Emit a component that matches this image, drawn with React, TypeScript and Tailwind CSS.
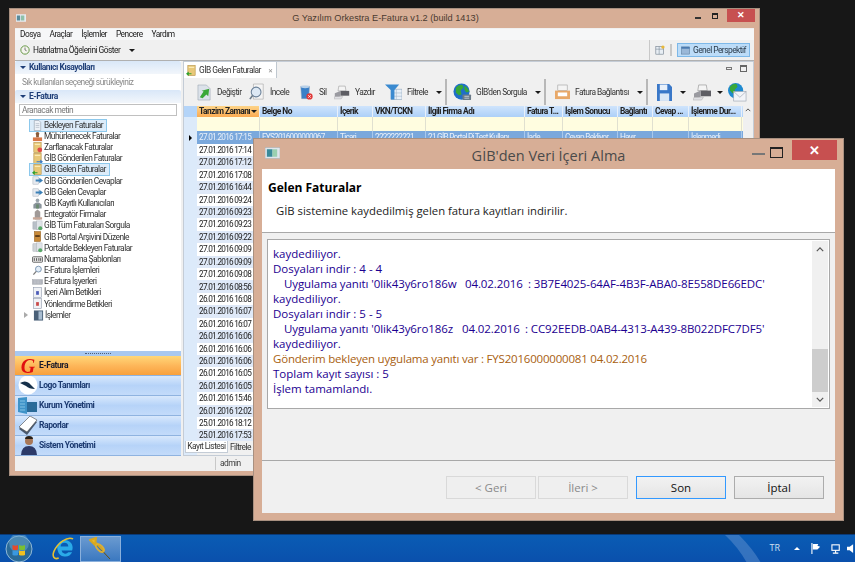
import React from "react";

const cols = [
  { n: "Tanzim Zamanı", w: "w-[63px]" },
  { n: "Belge No", w: "w-[78px]" },
  { n: "İçerik", w: "w-[35px]" },
  { n: "VKN/TCKN", w: "w-[53px]" },
  { n: "İlgili Firma Adı", w: "w-[99px]" },
  { n: "Fatura T...", w: "w-[38px]" },
  { n: "İşlem Sonucu", w: "w-[55px]" },
  { n: "Bağlantı", w: "w-[35px]" },
  { n: "Cevap ...", w: "w-[36px]" },
  { n: "İşlenme Dur...", w: "w-[53px]" },
];
const firstRow = ["27.01.2016 17:15", "FYS2016000000067", "Ticari", "2222222221", "21 GİB Portal Pi Test Kullanı", "İade", "Cevap Bekliyor", "Hayır", "", "İşlenmedi"];
const times = ["27.01.2016 17:14", "27.01.2016 17:12", "27.01.2016 17:08", "27.01.2016 16:44", "27.01.2016 09:24", "27.01.2016 09:23", "27.01.2016 09:23", "27.01.2016 09:22", "27.01.2016 09:09", "27.01.2016 09:09", "27.01.2016 09:08", "27.01.2016 08:56", "26.01.2016 16:08", "26.01.2016 16:07", "26.01.2016 16:07", "26.01.2016 16:06", "26.01.2016 16:06", "26.01.2016 16:06", "26.01.2016 16:05", "26.01.2016 16:05", "26.01.2016 15:46", "26.01.2016 12:02", "25.01.2016 18:12", "25.01.2016 17:53"];

function Folder({ badge }: { badge: string }) {
  return (
    <svg viewBox="0 0 12 12" className="w-[11px] h-[11px] shrink-0">
      <rect x="2" y="0.5" width="8" height="11" fill="#e8c878" stroke="#b08a3a" strokeWidth="0.6" />
      <rect x="3" y="2" width="6" height="1" fill="#fff4c8" />
      {badge === "red" && <circle cx="8.5" cy="8.5" r="2.6" fill="#e04848" />}
      {badge === "blue" && <path d="M5 9h4V7l3 2.5L9 12v-2H5z" fill="#3a7ac8" />}
      {badge === "green" && <path d="M6 9H3V7L0 9.5 3 12v-2h3z" fill="#2ca02c" />}
    </svg>
  );
}
function Doc({ c = "#d8dde6" }: { c?: string }) {
  return (
    <svg viewBox="0 0 12 12" className="w-[11px] h-[11px] shrink-0">
      <path d="M2.5.5h5l2 2v9h-7z" fill={c} stroke="#8a94a4" strokeWidth="0.6" />
      <path d="M4 4h4M4 6h4M4 8h4" stroke="#9aa4b4" strokeWidth="0.6" />
    </svg>
  );
}
function Stamp() {
  return (
    <svg viewBox="0 0 12 12" className="w-[11px] h-[11px] shrink-0">
      <circle cx="6" cy="3" r="2" fill="#8a5a3a" />
      <rect x="4.5" y="4" width="3" height="3" fill="#8a5a3a" />
      <rect x="1" y="7" width="10" height="4" fill="#d87848" />
    </svg>
  );
}
function Arrows() {
  return (
    <svg viewBox="0 0 12 12" className="w-[11px] h-[11px] shrink-0">
      <rect x="1" y="2" width="6" height="8" fill="#e6eaf0" stroke="#a0a8b4" strokeWidth="0.5" />
      <path d="M4 5h4V3l4 3-4 3V7H4z" fill="#3a80b8" />
    </svg>
  );
}
function Users() {
  return (
    <svg viewBox="0 0 12 12" className="w-[11px] h-[11px] shrink-0">
      <circle cx="6" cy="2.6" r="2" fill="#9aa4ac" />
      <path d="M1.5 11.5V7l3-2h3l3 2v4.500z" fill="#8a949c" />
      <rect x="4.5" y="7" width="3" height="4.5" fill="#6a8a70" />
    </svg>
  );
}
function Tower() {
  return (
    <svg viewBox="0 0 12 12" className="w-[11px] h-[11px] shrink-0">
      <path d="M3 11.5V3l3-2.5L9 3v8.500z" fill="#a09a98" />
      <rect x="1" y="9" width="10" height="2.5" fill="#c8a898" />
    </svg>
  );
}
function Server({ c = "#b8c0c8" }: { c?: string }) {
  return (
    <svg viewBox="0 0 12 12" className="w-[11px] h-[11px] shrink-0">
      <rect x="1" y="2" width="7" height="8" fill={c} stroke="#8a929a" strokeWidth="0.4" />
      <rect x="5" y="1" width="6" height="9" fill="#dfe3e8" stroke="#9aa2aa" strokeWidth="0.4" />
      <circle cx="9" cy="9" r="2.2" fill="#58a868" />
    </svg>
  );
}
function Box() {
  return (
    <svg viewBox="0 0 12 12" className="w-[11px] h-[11px] shrink-0">
      <rect x="2.5" y="0.5" width="7" height="11" fill="#c88a3a" stroke="#8a5a20" strokeWidth="0.5" />
      <rect x="3.5" y="4.5" width="5" height="2" fill="#5a3a18" />
    </svg>
  );
}
function Numbers() {
  return (
    <svg viewBox="0 0 12 12" className="w-[11px] h-[11px] shrink-0">
      <rect x="0.5" y="3" width="11" height="6" rx="1" fill="#e8e8e8" stroke="#404040" strokeWidth="0.8" />
      <path d="M2.5 4.5v3M5 4.5v3M7.5 4.5v3M9.5 4.5v3" stroke="#303030" strokeWidth="0.9" />
    </svg>
  );
}
function Loupe() {
  return (
    <svg viewBox="0 0 12 12" className="w-[11px] h-[11px] shrink-0">
      <circle cx="7" cy="4.5" r="3.2" fill="#e4eef8" stroke="#6a88a8" strokeWidth="0.9" />
      <path d="M4.6 7L1.5 10.5" stroke="#7a7a7a" strokeWidth="1.4" />
    </svg>
  );
}
function Keyboard() {
  return (
    <svg viewBox="0 0 12 12" className="w-[11px] h-[11px] shrink-0">
      <rect x="0.5" y="4" width="11" height="5" fill="#b0b4bc" stroke="#8a8e98" strokeWidth="0.4" />
      <path d="M2 5.5h8M2 7.5h8" stroke="#e8e8ee" strokeWidth="0.5" strokeDasharray="1 0.6" />
    </svg>
  );
}
function Script({ c }: { c: string }) {
  return (
    <svg viewBox="0 0 12 12" className="w-[11px] h-[11px] shrink-0">
      <rect x="1.5" y="0.5" width="9" height="11" fill="#f0f2f6" stroke="#8a94a8" strokeWidth="0.6" />
      <rect x="4.5" y="4.5" width="3" height="4" fill={c} />
    </svg>
  );
}
function Book() {
  return (
    <svg viewBox="0 0 12 12" className="w-[11px] h-[11px] shrink-0">
      <rect x="1" y="0.5" width="10" height="11" fill="#4a6078" />
      <rect x="6" y="1.5" width="4" height="9" fill="#a8bcd0" />
    </svg>
  );
}

const tree: { t: string; i: React.ReactNode; sel?: boolean }[] = [
  { t: "Bekleyen Faturalar", i: <Doc c="#eef2f8" />, sel: true },
  { t: "Mühürlenecek Faturalar", i: <Stamp /> },
  { t: "Zarflanacak Faturalar", i: <Folder badge="red" /> },
  { t: "GİB Gönderilen Faturalar", i: <Folder badge="blue" /> },
  { t: "GİB Gelen Faturalar", i: <Folder badge="green" />, sel: true },
  { t: "GİB Gönderilen Cevaplar", i: <Arrows /> },
  { t: "GİB Gelen Cevaplar", i: <Arrows /> },
  { t: "GİB Kayıtlı Kullanıcıları", i: <Users /> },
  { t: "Entegratör Firmalar", i: <Tower /> },
  { t: "GİB Tüm Faturaları Sorgula", i: <Server /> },
  { t: "GİB Portal Arşivini Düzenle", i: <Box /> },
  { t: "Portalde Bekleyen Faturalar", i: <Server c="#d0d4d8" /> },
  { t: "Numaralama Şablonları", i: <Numbers /> },
  { t: "E-Fatura İşlemleri", i: <Loupe /> },
  { t: "E-Fatura İşyerleri", i: <Keyboard /> },
  { t: "İçeri Alım Betikleri", i: <Script c="#4a5ab8" /> },
  { t: "Yönlendirme Betikleri", i: <Script c="#c84848" /> },
];

function Caret({ cls = "" }: { cls?: string }) {
  return <span className={`inline-block shrink-0 w-0 h-0 border-l-[3px] border-r-[3px] border-t-[3px] border-l-transparent border-r-transparent border-t-[#1a1a1a] ${cls}`} />;
}

function PrinterIcon({ cls }: { cls: string }) {
  return (
    <svg viewBox="0 0 20 18" className={cls}>
      <path d="M6 1h8l1 6H5z" fill="#f4f4f4" stroke="#888" strokeWidth="0.6" />
      <path d="M8 7h11v6H8z" fill="#5e5e64" />
      <path d="M1 10l7-3v7l-7 2z" fill="#9a9aa0" />
      <path d="M1 14h10l-2 3H0z" fill="#e0e0e4" stroke="#999" strokeWidth="0.4" />
    </svg>
  );
}
function GlobeIcon({ cls }: { cls: string }) {
  return (
    <svg viewBox="0 0 20 20" className={cls}>
      <circle cx="9" cy="9" r="8.5" fill="#1f6fc8" />
      <path d="M3 5q3-4 7-3l1 3-3 3 1 4-3 1-3-3zM12 3q4 2 5 6l-3 1-2-3z" fill="#38a838" />
      <rect x="10" y="12" width="9" height="6" rx="1" fill="#6a7a88" />
      <path d="M12 14h5M12 16h5" stroke="#d8dfe6" strokeWidth="0.8" />
    </svg>
  );
}

function Logo({ k }: { k: string }) {
  if (k === "g")
    return (
      <div className="w-[16px] h-[18px] ml-[5px] flex items-center justify-center text-[#e01010] font-['Liberation_Serif',serif] italic font-bold text-[20px] tracking-normal leading-none">
        G
      </div>
    );
  if (k === "feather")
    return (
      <svg viewBox="0 0 22 20" className="w-[22px] h-[20px] ml-[2px]">
        <circle cx="11" cy="9" r="9.5" fill="#fff" />
        <path d="M3 7q5-3 9 0l6 6q-6 0-9-3z" fill="#16304a" />
      </svg>
    );
  if (k === "building")
    return (
      <svg viewBox="0 0 22 20" className="w-[22px] h-[20px] ml-[2px]">
        <path d="M1 2l9-1v17l-9-2z" fill="#3f93c8" />
        <path d="M10 6h10v10H10z" fill="#2a6a98" />
        <path d="M3 5h5M3 8h5M3 11h5M3 14h5" stroke="#8ac8e8" strokeWidth="0.9" />
      </svg>
    );
  if (k === "report")
    return (
      <svg viewBox="0 0 22 20" className="w-[22px] h-[20px] ml-[2px]">
        <path d="M2 13L13 2l7 4-10 13z" fill="#4a5a70" />
        <path d="M2 11L13 0l7 4L10 16z" fill="#fff" stroke="#444" strokeWidth="0.6" />
      </svg>
    );
  return (
    <svg viewBox="0 0 22 20" className="w-[22px] h-[20px] ml-[2px]">
      <circle cx="12" cy="5" r="4" fill="#a87858" />
      <path d="M12 0a4 3 0 0 1 4 3H8a4 3 0 0 1 4-3z" fill="#2a2018" />
      <path d="M4 20q0-10 8-10t8 10z" fill="#2c3a68" />
    </svg>
  );
}

function OutlookBar({ k, label, active }: { k: string; label: string; active?: boolean }) {
  return (
    <div
      className={
        active
          ? "h-[20px] flex items-center bg-gradient-to-b from-[#ffd778] via-[#fdb75a] to-[#f8a03c] border-b border-[#8fb3e0]"
          : "h-[20px] flex items-center bg-gradient-to-b from-[#d8e8fc] via-[#b6d3f8] to-[#c3dbfa] border-b border-[#8fb3e0] overflow-hidden"
      }
    >
      <div className="w-[24px] shrink-0">
        <Logo k={k} />
      </div>
      <span className={`text-[8.5px] font-bold tracking-[-0.42px] ${active ? "text-[#1a1a2a]" : "text-[#1c3a70]"}`}>{label}</span>
    </div>
  );
}

function SideHeader({ t }: { t: string }) {
  return (
    <div className="h-[13px] flex items-center pl-[5px] gap-[3px] bg-gradient-to-b from-[#d9e7f8] to-[#f2f6fb] rounded-t-[2px]">
      <Caret cls="!border-t-[#1f3f78]" />
      <span className="text-[8.5px] font-bold tracking-[-0.45px] text-[#1f3f78]">{t}</span>
    </div>
  );
}

function Sep() {
  return <div className="ml-[3px] w-[2px] h-[26px] bg-[#b8b8b8] shrink-0" />;
}

function Label({ t, w }: { t: string; w: string }) {
  return <span className={`${w} ml-[5px] shrink-0 whitespace-nowrap`}>{t}</span>;
}

function MainWindow() {
  return (
    <div className="absolute left-[9px] top-[8px] w-[751px] h-[468px] bg-[#d7ae96] border border-[#a89080] flex flex-col font-['Roboto',sans-serif] text-[#333]">
      <div className="h-[19px] shrink-0 relative flex items-center justify-center">
        <svg viewBox="0 0 12 9" className="absolute left-[6px] top-[5px] w-[10px] h-[8px]">
          <rect width="12" height="9" fill="#e6ecf2" />
          <rect x="1" y="1.5" width="4" height="6" fill="#5a8a9a" />
          <rect x="6" y="1.5" width="4" height="6" fill="#8fc0a8" />
        </svg>
        <span className="text-[9.2px] text-[#4a3a30] ml-[2px] font-['Liberation_Sans',sans-serif]">G Yazılım Orkestra E-Fatura v1.2 (build 1413)</span>
        <div className="absolute right-[4px] top-0 flex items-start">
          <div className="w-[6px] h-[2px] bg-[#333] mt-[8px] mr-[11px]" />
          <div className="w-[6px] h-[6px] border border-[#222] border-t-2 mt-[4px] mr-[9px]" />
          <div className="w-[28px] h-[13px] bg-[#c75050] text-white text-[9px] font-bold leading-[13px] text-center">✕</div>
        </div>
      </div>
      <div className="flex-1 mx-[5px] mb-[4px] bg-[#f0f0f0] flex flex-col overflow-hidden text-[8.4px] tracking-[-0.52px] blur-[0.3px]">
        <div className="h-[11px] shrink-0 bg-[#f6f7f8] flex items-center pl-[5px] gap-[9px] text-[#222] mt-[1px]">
          <span>Dosya</span>
          <span>Araçlar</span>
          <span>İşlemler</span>
          <span>Pencere</span>
          <span>Yardım</span>
        </div>
        <div className="h-[20px] shrink-0 flex items-center pl-[5px] text-[#222]">
          <svg viewBox="0 0 12 12" className="w-[10px] h-[10px] mr-[3px]">
            <circle cx="6" cy="6" r="5" fill="#f4f4ee" stroke="#6a9a4a" strokeWidth="1.2" />
            <path d="M6 3v3l2 1" stroke="#444" strokeWidth="0.8" fill="none" />
          </svg>
          <span>Hatırlatma Öğelerini Göster</span>
          <Caret cls="ml-[9px]" />
          <div className="ml-auto flex items-center h-full border-l border-[#c8c8c8] pl-[5px] pr-[4px]">
            <svg viewBox="0 0 12 12" className="w-[10px] h-[10px]">
              <rect x="1" y="2" width="9" height="9" fill="#e8eef4" stroke="#6a7a88" strokeWidth="0.7" />
              <path d="M1 5h9M5 2v9" stroke="#6a7a88" strokeWidth="0.6" />
              <circle cx="9.5" cy="2.5" r="2" fill="#e8b838" />
            </svg>
            <div className="w-[2px] h-[12px] bg-[#c8c8c8] mx-[5px]" />
            <div className="h-[14px] w-[73px] bg-[#bcdcf8] border border-[#7db8e8] flex items-center pl-[3px] gap-[3px] whitespace-nowrap text-[#2a3a4a]">
              <svg viewBox="0 0 10 10" className="w-[9px] h-[9px] shrink-0">
                <rect x="0.5" y="1" width="9" height="8" fill="#9ab8d8" stroke="#5a7898" strokeWidth="0.6" />
                <rect x="0.5" y="1" width="9" height="2" fill="#4a7ab0" />
              </svg>
              <span>Genel Perspektif</span>
            </div>
          </div>
        </div>
        <div className="flex-1 min-h-0 flex border-t border-[#b0b0b0]">
          <aside className="w-[166px] shrink-0 bg-white flex flex-col">
            <SideHeader t="Kullanıcı Kısayolları" />
            <div className="h-[16px] shrink-0 flex items-center pl-[7px] text-[#8a8a8a]">Sık kullanılan seçeneği sürükleyiniz</div>
            <SideHeader t="E-Fatura" />
            <div className="mx-[4px] mt-[1px] h-[12px] shrink-0 border border-[#c0c0c0] flex items-center pl-[2px] text-[#777]">Aranacak metin</div>
            <div className="flex flex-col pt-[3.5px] pl-[15px]">
              {tree.map((r) => (
                <div key={r.t} className="h-[11.18px] flex items-center">
                  <div className={`h-[11.18px] flex items-center gap-[1px] pl-[2px] pr-[3px] ${r.sel ? "bg-[#dcecfa] outline outline-1 outline-[#8cc8ec]" : ""}`}>
                    {r.i}
                    <span className="whitespace-nowrap text-[#333]">{r.t}</span>
                  </div>
                </div>
              ))}
              <div className="h-[11.18px] flex items-center gap-[1px] -ml-[6px]">
                <span className="w-0 h-0 border-t-[3px] border-b-[3px] border-l-[4px] border-t-transparent border-b-transparent border-l-[#aaa] mr-[4px]" />
                <Book />
                <span className="text-[#333]">İşlemler</span>
              </div>
            </div>
            <div className="flex-1" />
            <div className="h-[5px] shrink-0 bg-[#a8c8f0] flex items-center justify-center">
              <span className="w-[26px] border-t border-dotted border-[#50607a]" />
            </div>
            <OutlookBar k="g" label="E-Fatura" active />
            <OutlookBar k="feather" label="Logo Tanımları" />
            <OutlookBar k="building" label="Kurum Yönetimi" />
            <OutlookBar k="report" label="Raporlar" />
            <OutlookBar k="user" label="Sistem Yönetimi" />
          </aside>
          <section className="flex-1 min-w-0 ml-[2px] flex flex-col border border-[#c4ccd6] bg-[#f0f0f0] relative">
            <div className="h-[16px] shrink-0 flex items-end relative">
              <div className="h-[16px] w-[93px] bg-white border-r border-[#c0c8d0] flex items-center pl-[2px] gap-[2px] text-[#333]">
                <Folder badge="green" />
                <span className="whitespace-nowrap">GİB Gelen Faturalar</span>
                <span className="text-[6px] text-[#888] ml-[5px]">✕</span>
              </div>
              <div className="absolute right-[6px] top-[3px] flex gap-[8px] items-center">
                <div className="w-[6px] h-[3px] border border-[#777]" />
                <div className="w-[7px] h-[7px] border border-[#666] border-t-2" />
              </div>
            </div>
            <div className="h-[28px] shrink-0 flex items-center text-[#333] pl-[13px] whitespace-nowrap">
              <svg viewBox="0 0 16 18" className="w-[15px] h-[17px] shrink-0">
                <path d="M1 1h9l4 4v12H1z" fill="#dce2ea" stroke="#9aa4b0" strokeWidth="0.6" />
                <path d="M3 14l4-6-2-1 8-2-1 8-2-2-4 4z" fill="#3aa838" />
              </svg>
              <Label t="Değiştir" w="w-[24px]" />
              <svg viewBox="0 0 18 18" className="w-[16px] h-[18px] ml-[8px] shrink-0">
                <path d="M5 0h11v17H5z" fill="#f4f4f4" stroke="#9a9a9a" strokeWidth="0.6" />
                <circle cx="8" cy="9" r="5.5" fill="#dce8f4" stroke="#6a8098" strokeWidth="1.2" />
                <path d="M4 13l-3 4" stroke="#6a7a88" strokeWidth="1.8" />
              </svg>
              <Label t="İncele" w="w-[20px]" />
              <svg viewBox="0 0 16 18" className="w-[14px] h-[17px] ml-[9px] shrink-0">
                <path d="M2 2h10l-1 14H3z" fill="#3a80c8" stroke="#8aa0b8" strokeWidth="0.6" />
                <ellipse cx="7" cy="2.5" rx="5" ry="1.6" fill="#b8d0e8" />
                <circle cx="12" cy="13.5" r="3.6" fill="#e03838" />
                <path d="M10.5 12l3 3M13.5 12l-3 3" stroke="#fff" strokeWidth="0.9" />
              </svg>
              <span className="ml-[6px] w-[8px] shrink-0">Sil</span>
              <PrinterIcon cls="w-[16px] h-[15px] ml-[7px] shrink-0" />
              <Label t="Yazdır" w="w-[20px]" />
              <svg viewBox="0 0 18 18" className="w-[17px] h-[18px] ml-[10px] shrink-0">
                <rect x="7" y="6" width="11" height="11" fill="#e8f0f8" stroke="#8aa0b8" strokeWidth="0.6" />
                <path d="M7 10h11M7 13.5h11M12 6v11" stroke="#a0b4c8" strokeWidth="0.6" />
                <path d="M0 1h15l-5 6v10H6V7z" fill="#3a8ad0" />
              </svg>
              <Label t="Filtrele" w="w-[22px]" />
              <Caret cls="ml-[7px]" />
              <Sep />
              <GlobeIcon cls="w-[19px] h-[19px] ml-[6px] shrink-0" />
              <span className="ml-[4px] w-[52px] shrink-0">GİB'den Sorgula</span>
              <Caret cls="ml-[7px]" />
              <Sep />
              <svg viewBox="0 0 16 18" className="w-[15px] h-[17px] ml-[9px] shrink-0">
                <rect x="3" y="1" width="10" height="6" fill="#f4f4f4" stroke="#999" strokeWidth="0.6" />
                <path d="M0 7h16v9H0z" fill="#e8a868" />
                <rect x="3" y="9" width="10" height="4" fill="#fff" />
              </svg>
              <Label t="Fatura Bağlantısı" w="w-[53px]" />
              <Caret cls="ml-[9px]" />
              <Sep />
              <svg viewBox="0 0 16 18" className="w-[15px] h-[17px] ml-[9px] shrink-0">
                <path d="M0 0h13l3 3v15H0z" fill="#3a78c8" />
                <rect x="3" y="0.5" width="8" height="6" fill="#e8f0fa" />
                <rect x="3" y="10" width="10" height="8" fill="#dce8f6" />
              </svg>
              <Caret cls="ml-[8px]" />
              <PrinterIcon cls="w-[19px] h-[17px] ml-[7px] shrink-0" />
              <Caret cls="ml-[5px]" />
              <svg viewBox="0 0 20 20" className="w-[19px] h-[19px] ml-[5px] shrink-0">
                <circle cx="8" cy="8" r="8" fill="#1f8ad0" />
                <path d="M2 4q3-4 7-3l1 3-3 3 1 3-3 1-3-3z" fill="#38a838" />
                <rect x="6" y="9" width="13" height="10" fill="#f2f4f8" stroke="#a0a8b4" strokeWidth="0.7" />
                <path d="M6 9l6.500 6L19 9" fill="none" stroke="#a0a8b4" strokeWidth="0.7" />
              </svg>
            </div>
            <div className="flex-1 min-h-0 flex overflow-hidden">
              <div className="w-[13px] shrink-0 flex flex-col bg-[#dceafa]">
                <div className="h-[11px] bg-[#b4d4f8]" />
                <div className="h-[14px]" />
                <div className="h-[13px] flex items-center justify-center">
                  <span className="w-0 h-0 border-t-[3px] border-b-[3px] border-l-[3px] border-t-transparent border-b-transparent border-l-black" />
                </div>
              </div>
              <div className="flex-1 min-w-0 flex flex-col">
                <div className="h-[11px] shrink-0 flex bg-gradient-to-b from-[#cfe4fc] to-[#add0f8] font-bold text-[#222]">
                  {cols.map((c, i) => (
                    <div key={c.n} className={`${c.w} shrink-0 flex items-center pl-[2px] whitespace-nowrap overflow-hidden border-r border-[#e8f0fa] ${i === 0 ? "bg-gradient-to-b from-[#fdd488] to-[#fbaa50]" : ""}`}>
                      <span>{c.n}</span>
                      {i === 0 && <Caret cls="ml-[1px]" />}
                    </div>
                  ))}
                </div>
                <div className="h-[14px] shrink-0 flex bg-[#fffde0]">
                  {cols.map((c) => (
                    <div key={c.n} className={`${c.w} shrink-0 border-r border-[#e0e0d0]`} />
                  ))}
                </div>
                <div className="h-[13px] shrink-0 flex bg-[#7aa8dc] text-[8.2px] tracking-[-0.72px] text-[#e8f0fa] whitespace-nowrap">
                  {cols.map((c, i) => (
                    <div key={c.n} className={`${c.w} shrink-0 pl-[2px] overflow-hidden border-r border-[#a8c8ec] leading-[13px]`}>{firstRow[i]}</div>
                  ))}
                </div>
                {times.map((t, i) => (
                  <div key={i} className={`h-[12.42px] shrink-0 flex items-center pl-[2px] text-[8.2px] tracking-[-0.72px] text-[#222] ${i % 2 === 0 ? "bg-white" : "bg-[#dfe9f8]"}`}>
                    {t}
                  </div>
                ))}
              </div>
              <div className="w-[10px] shrink-0 flex justify-center pt-[2px] bg-[#f0f0f0] text-[#444]">
                <svg viewBox="0 0 8 5" className="w-[6px] h-[4px]"><path d="M1 4l3-3 3 3" fill="none" stroke="#444" strokeWidth="1.2" /></svg>
              </div>
            </div>
            <div className="absolute left-[1px] top-[379px] h-[12px] flex text-[#333] bg-[#f0f0f0] w-[80px]">
              <div className="w-[43px] bg-white border border-[#c4ccd6] border-t-0 flex items-center justify-center whitespace-nowrap">Kayıt Listesi</div>
              <div className="pl-[2px] leading-[12px]">Filtrele</div>
            </div>
          </section>
        </div>
        <div className="h-[15px] shrink-0 flex items-center text-[#444] pl-[200px] bg-[#f0f0f0]">
          <span className="border-l border-[#c8c8c8] pl-[4px] h-[13px] leading-[13px]">admin</span>
        </div>
      </div>
    </div>
  );
}

function DialogLine({ t, orange }: { t: string; orange?: boolean }) {
  return <div className={`h-[15px] leading-[15px] whitespace-pre ${orange ? "text-[#a8600f] tracking-[-0.2px]" : "text-[#1c0090]"}`}>{t}</div>;
}

function ReplyLine({ name, date, uuid, nameW, dateW }: { name: string; date: string; uuid: string; nameW: string; dateW: string }) {
  return (
    <div className="h-[15px] leading-[15px] whitespace-pre pl-[11px] flex text-[#1c0090]">
      <span className={`${nameW} tracking-[-0.1px] shrink-0`}>{name}</span>
      <span className={`${dateW} tracking-[-0.1px] shrink-0`}>{date}</span>
      <span className="tracking-[-0.1px]">{uuid}</span>
    </div>
  );
}

function Btn({ t, kind }: { t: string; kind: "off" | "on" | "def" }) {
  const c =
    kind === "off"
      ? "border-[#d9d9d9] text-[#8a8a8a] bg-[#efefef]"
      : kind === "on"
        ? "border-[#3399ff] text-[#111] bg-gradient-to-b from-[#f2f2f2] to-[#e5e5e5]"
        : "border-[#acacac] text-[#111] bg-gradient-to-b from-[#f2f2f2] to-[#e5e5e5]";
  return <div className={`w-[90px] h-[23px] border flex items-center justify-center text-[11.5px] ${c}`}>{t}</div>;
}

function Dialog() {
  return (
    <div className="absolute left-[253px] top-[138px] w-[591px] h-[383px] bg-[#d7ae96] border border-[#a89080] flex flex-col font-['Open_Sans',sans-serif]">
      <div className="h-[30px] shrink-0 relative flex items-center justify-center">
        <svg viewBox="0 0 16 12" className="absolute left-[11px] top-[8px] w-[15px] h-[12px]">
          <rect width="16" height="12" fill="#dfe6ec" stroke="#a8a8a8" strokeWidth="0.6" />
          <rect x="2" y="2" width="6" height="8" fill="#3a8a9a" />
          <rect x="8" y="2" width="5" height="8" fill="#9ad0b0" />
        </svg>
        <span className="text-[14.5px] text-[#4a4a4a] ml-[0px] mt-[3px]">GİB'den Veri İçeri Alma</span>
        <div className="absolute right-[6px] top-[1px] flex items-start">
          <div className="w-[13px] h-[2px] bg-[#777] mt-[13px] mr-[5px]" />
          <div className="w-[13px] h-[11px] border border-[#222] border-t-2 mt-[7px] mr-[9px]" />
          <div className="w-[45px] h-[20px] bg-[#c75050] text-white text-[13px] font-bold leading-[20px] text-center">✕</div>
        </div>
      </div>
      <div className="flex-1 mx-[8px] mb-[7px] bg-[#f0f0f0] flex flex-col overflow-hidden">
        <div className="h-[64px] shrink-0 bg-white border-b border-[#a8a8a8] pl-[6px] pt-[11px] text-black">
          <div className="text-[12px] font-bold leading-[16px]">Gelen Faturalar</div>
          <div className="text-[11.3px] leading-[16px] pl-[8px] mt-[7px] text-[#222]">GİB sistemine kaydedilmiş gelen fatura kayıtları indirilir.</div>
        </div>
        <div className="h-[170px] shrink-0 mt-[6px] mx-[5px] bg-white border border-[#a8a8a8] flex text-[11.5px]">
          <div className="flex-1 min-w-0 pl-[5px] pt-[6px] overflow-hidden">
            <DialogLine t="kaydediliyor." />
            <DialogLine t="Dosyaları indir : 4 - 4" />
            <ReplyLine name="Uygulama yanıtı '0lik43y6ro186w" date="04.02.2016" uuid=": 3B7E4025-64AF-4B3F-ABA0-8E558DE66EDC'" nameW="w-[181px]" dateW="w-[63px]" />
            <DialogLine t="kaydediliyor." />
            <DialogLine t="Dosyaları indir : 5 - 5" />
            <ReplyLine name="Uygulama yanıtı '0lik43y6ro186z" date="04.02.2016" uuid=": CC92EEDB-0AB4-4313-A439-8B022DFC7DF5'" nameW="w-[178px]" dateW="w-[63px]" />
            <DialogLine t="kaydediliyor." />
            <DialogLine orange t="Gönderim bekleyen uygulama yanıtı var : FYS2016000000081 04.02.2016" />
            <DialogLine t="Toplam kayıt sayısı : 5" />
            <DialogLine t="İşlem tamamlandı." />
          </div>
          <div className="w-[16px] shrink-0 my-[1px] mr-[1px] bg-[#f0f0f0] flex flex-col items-center">
            <svg viewBox="0 0 10 6" className="w-[8px] h-[5px] mt-[6px] shrink-0"><path d="M1 5l4-4 4 4" fill="none" stroke="#555" strokeWidth="1.5" /></svg>
            <div className="flex-1" />
            <div className="w-[16px] h-[43px] bg-[#cdcdcd] shrink-0" />
            <svg viewBox="0 0 10 6" className="w-[8px] h-[5px] mt-[5px] mb-[5px] shrink-0"><path d="M1 1l4 4 4-4" fill="none" stroke="#555" strokeWidth="1.5" /></svg>
          </div>
        </div>
        <div className="flex-1" />
        <div className="h-[53px] shrink-0 border-t border-[#a8a8a8] flex items-start justify-end pt-[15px] pr-[11px]">
          <Btn t="< Geri" kind="off" />
          <div className="w-[2px]" />
          <Btn t="İleri >" kind="off" />
          <div className="w-[8px]" />
          <Btn t="Son" kind="on" />
          <div className="w-[8px]" />
          <Btn t="İptal" kind="def" />
        </div>
      </div>
    </div>
  );
}

function Taskbar() {
  return (
    <div className="absolute left-0 right-0 bottom-0 h-[28px] bg-gradient-to-b from-[#0a5cb4] to-[#0a50ac] border-t border-[#0a3a78] flex items-center overflow-hidden">
      <svg viewBox="0 0 120 28" className="absolute left-[700px] top-0 w-[120px] h-[28px]">
        <path d="M25 0h14q14 14 22 28H47Q38 12 25 0z" fill="#5a8ccc" opacity="0.55" />
      </svg>
      <svg viewBox="0 0 28 28" className="w-[28px] h-[28px] ml-[5px] shrink-0">
        <circle cx="14" cy="14" r="13" fill="#2a6a98" stroke="#90b8d8" strokeWidth="1" />
        <circle cx="14" cy="8" r="10" fill="#6aa8d0" opacity="0.5" />
        <path d="M7.5 10q3 1.500 5.500 0v4.500q-2.500 1-5.500 0z" fill="#e84a2a" />
        <path d="M14 10q3 1.500 6 0v4.500q-3 1-6 0z" fill="#7ac030" />
        <path d="M7.5 15.500q3 1 5.500 0V20q-2.500 1-5.500 0z" fill="#3a98e0" />
        <path d="M14 15.500q3 1 6 0V20q-3 1-6 0z" fill="#f0c020" />
      </svg>
      <svg viewBox="0 0 24 24" className="w-[23px] h-[23px] ml-[19px] shrink-0">
        <path d="M6 14a8 8 0 1 1 15 0H10a4 4 0 0 0 7 2h4a8 8 0 0 1-15-2z" fill="#2aaae8" />
        <path d="M9 10h8a4 4 0 0 0-8 0z" fill="#0a5cb4" />
        <path d="M22 2C16-1 6 6 2 15c-2 5 0 9 5 7" fill="none" stroke="#e8c030" strokeWidth="1.6" />
      </svg>
      <div className="w-[41px] h-[26px] ml-[5px] bg-gradient-to-b from-[#6a9ad0] to-[#3a78c0] border border-[#8ab0dc] flex items-center justify-center shrink-0">
        <svg viewBox="0 0 24 24" className="w-[24px] h-[24px]">
          <path d="M5 5l16 17" fill="none" stroke="#6a5010" strokeWidth="1" />
          <path d="M1 3l6-2-1 7zM6 5l9 9" fill="#e8b830" stroke="#d8a820" strokeWidth="2" />
          <ellipse cx="11" cy="11" rx="5" ry="2.6" transform="rotate(45 11 11)" fill="none" stroke="#e0b030" strokeWidth="1.6" />
        </svg>
      </div>
      <div className="ml-auto flex items-center text-white font-['Open_Sans',sans-serif] pr-[1px]">
        <span className="text-[9px] text-[#d0e0f0] mr-[14px] -mt-[2px]">TR</span>
        <span className="w-0 h-0 border-l-[3px] border-r-[3px] border-b-[3px] border-l-transparent border-r-transparent border-b-white mr-[11px]" />
        <svg viewBox="0 0 12 12" className="w-[11px] h-[11px] mr-[9px]"><path d="M1 0v12" stroke="#fff" strokeWidth="1.2" /><path d="M2 1h6l-1 2 3 1-3 3H2z" fill="#fff" /></svg>
        <svg viewBox="0 0 12 12" className="w-[11px] h-[11px] mr-[5px]"><rect x="1" y="2" width="8" height="6" fill="none" stroke="#fff" strokeWidth="1.2" /><path d="M5 8v3M2 11h6" stroke="#fff" strokeWidth="1.2" /></svg>
        <svg viewBox="0 0 8 12" className="w-[7px] h-[11px]"><path d="M0 4h3l4-3v10L3 8H0z" fill="#fff" /></svg>
      </div>
    </div>
  );
}

export default function App() {
  return (
    <div className="relative w-[855px] h-[562px] overflow-hidden bg-[#171717]">
      <MainWindow />
      <Dialog />
      <Taskbar />
    </div>
  );
}
